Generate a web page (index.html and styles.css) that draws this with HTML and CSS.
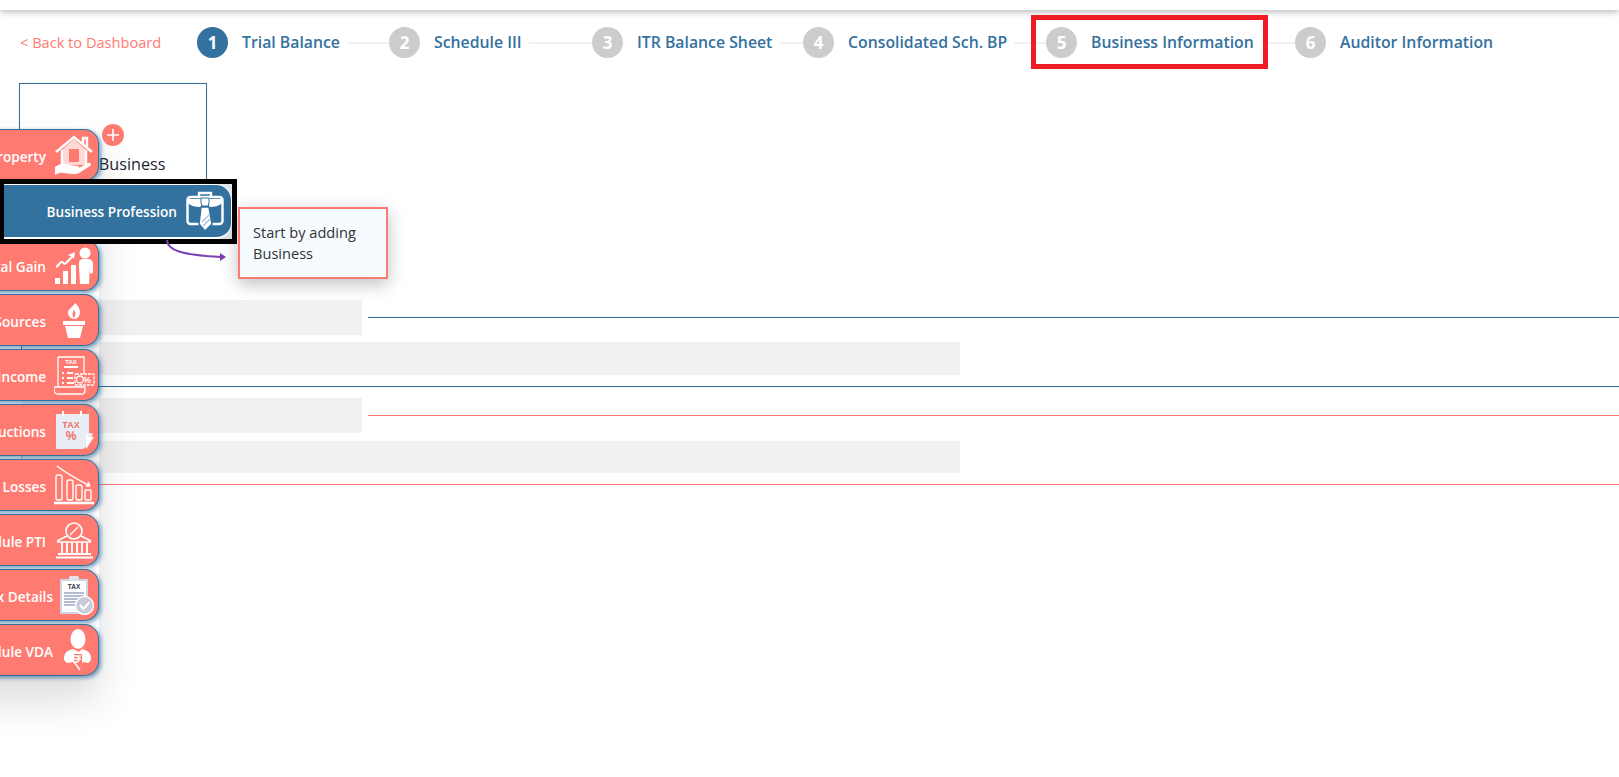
FILE: index.html
```html
<!DOCTYPE html>
<html lang="en">
<head>
<meta charset="utf-8">
<title>Business Information</title>
<link rel="stylesheet" href="styles.css">
</head>
<body>
<div class="topbar"></div>

<nav class="stepper">
  <a class="back">&lt; Back to Dashboard</a>
  <div class="step s1"><span class="num on">1</span><span class="label">Trial Balance</span><span class="line"></span></div>
  <div class="step s2"><span class="num">2</span><span class="label">Schedule III</span><span class="line"></span></div>
  <div class="step s3"><span class="num">3</span><span class="label">ITR Balance Sheet</span><span class="line"></span></div>
  <div class="step s4"><span class="num">4</span><span class="label">Consolidated Sch. BP</span><span class="line"></span></div>
  <div class="step s5"><span class="mark"></span><span class="num">5</span><span class="label">Business Information</span><span class="line"></span></div>
  <div class="step s6"><span class="num">6</span><span class="label">Auditor Information</span></div>
</nav>

<main class="content">
  <section class="card">
    <span class="plus"><svg width="14" height="14" viewBox="0 0 14 14"><path d="M7 1v12M1 7h12" stroke="#fff" stroke-width="1.6"/></svg></span>
    <span class="card-text">Add Business</span>
  </section>
  <section class="group blue">
    <div class="bone short"></div>
    <div class="bone long"></div>
  </section>
  <section class="group red">
    <div class="bone short"></div>
    <div class="bone long low"></div>
  </section>
</main>

<aside class="side">
  <div class="item"><span class="txt">House Property</span><span class="ico">
    <svg width="38" height="41" viewBox="0 0 38 41" fill="none" stroke="#fff" stroke-width="2.4"><path d="M7 15 19 4l12 11v15H7z" fill="#ffd9d5" stroke="none"/><path d="M1 17 19 2l18 15M28 9V3h4v10"/><path d="M7 15v15M31 15v15"/><rect x="14" y="14" width="10" height="13" fill="#ff7b72" stroke="none"/><path d="M0 32c6-4 10-4 14-2l8 1c3 0 3 3 0 3h-6l8-1 9-5c3-1 4 2 2 3l-11 7c-6 3-14-1-20 0l-4 2z" fill="#fff" stroke="none"/></svg></span></div>
  <div class="item"></div>
  <div class="item"><span class="txt">Capital Gain</span><span class="ico">
    <svg width="39" height="37" viewBox="0 0 39 37"><g fill="#fff"><rect x="0" y="31" width="5" height="6"/><rect x="8" y="24" width="5" height="13"/><rect x="16" y="18" width="5" height="19"/><circle cx="30" cy="6" r="5.5"/><path d="M24 16c0-3 2-4 4-4h5c3 0 5 2 5 5v8c0 2-3 2-3 0v-5l-1 17h-9l-1-17z"/><path d="m13 8 7-3-1 7-2-2z"/></g><path d="M1 20c3-1 4-6 6-5s2 3 4 1l6-6" fill="none" stroke="#fff" stroke-width="2"/></svg></span></div>
  <div class="item"><span class="txt">Other Sources</span><span class="ico">
    <svg width="22" height="35" viewBox="0 0 22 35"><path fill="#fff" d="M12 0c5 4 6 10 4 13-1 2-3 3-5 3-4-1-6-3-6-7 0-3 5-5 7-9z"/><path fill="#ff7b72" d="M11 7c2 2 2 5 0 8-2-3-2-5 0-8z"/><path fill="#fff" d="M0 18h22v4H0zM2 23h18l-3 12H5z"/></svg></span></div>
  <div class="item"><span class="txt">Other Income</span><span class="ico">
    <svg width="41" height="41" viewBox="0 0 41 41" fill="none" stroke="#fff" stroke-width="1.3"><path d="M4 2h26v18M4 2v30M4 32H0v3c0 3 2 4 4 4h24c2 0 3-2 3-4v-3H4"/><text x="17" y="9" font-size="6" font-weight="700" fill="#fff" stroke="none" text-anchor="middle" font-family="Liberation Sans">TAX</text><path d="M10 12h14M8 18h2M13 18h6M8 23h2M13 23h6M8 28h2M13 28h7" stroke-width="2"/><rect x="21" y="19" width="19" height="11" rx="1" stroke-dasharray="3 1" fill="#ff7b72"/><text x="33" y="28" font-size="9" font-weight="700" fill="#fff" stroke="none" text-anchor="middle" font-family="Liberation Sans">%</text><circle cx="26" cy="24.500" r="3.500"/></svg></span></div>
  <div class="item"><span class="txt">Deductions</span><span class="ico">
    <svg width="39" height="40" viewBox="0 0 39 40"><path fill="#e9eef4" d="M1 4h33v19h2l2 1-7 13-3 2H1z"/><path fill="#fff" d="M31 39 39 27h-5l-1-3-2 1z"/><path d="M8 1v5M26 1v5" stroke="#fff" stroke-width="2"/><text x="16" y="18" font-size="9" font-weight="700" fill="#ef6f6a" text-anchor="middle" font-family="Liberation Sans">TAX</text><text x="16" y="30" font-size="12" font-weight="700" fill="#ef6f6a" text-anchor="middle" font-family="Liberation Sans">%</text></svg></span></div>
  <div class="item"><span class="txt">Carry Forward Losses</span><span class="ico">
    <svg width="40" height="40" viewBox="0 0 40 40" fill="none" stroke="#fff" stroke-width="1.4"><rect x="2" y="10" width="6" height="25" rx="2"/><rect x="13" y="15" width="6" height="20" rx="2"/><rect x="22" y="20" width="6" height="15" rx="2"/><rect x="31" y="25" width="6" height="10" rx="1"/><path d="M0 38h40" stroke-width="2.500"/><path d="M3 1c10 8 20 13 33 20M36 21l-4 0M36 21l-2-4" stroke-width="1.500"/></svg></span></div>
  <div class="item"><span class="txt">Schedule PTI</span><span class="ico">
    <svg width="37" height="37" viewBox="0 0 37 37" fill="none" stroke="#fff" stroke-width="1.6"><circle cx="18" cy="9" r="8"/><path d="M14 13l8-8" stroke-width="1.300"/><path d="M1 19 11 14M35 19 25 14M1 20h34"/><path d="M6 20v11M11 20v11M16 20v11M21 20v11M26 20v11M31 20v11M2 32h33" stroke-width="1.800"/><path d="M0 35.500h37" stroke-width="2"/></svg></span></div>
  <div class="item wide"><span class="txt">Tax Details</span><span class="ico">
    <svg width="34" height="39" viewBox="0 0 34 39"><rect x="0" y="3" width="28" height="35" fill="#cfd4e4"/><rect x="2" y="5" width="24" height="31" fill="#fff"/><rect x="9" y="0" width="10" height="5" rx="1.500" fill="#dfe3ec"/><text x="14" y="13" font-size="6.500" font-weight="700" fill="#3a3a4a" text-anchor="middle" font-family="Liberation Sans">TAX</text><path d="M4 17h20M4 20h20M4 23h20M4 26h14M4 29h12" stroke="#9aa5c4" stroke-width="1.500"/><circle cx="24.500" cy="29.500" r="9" fill="#c8ccd8" stroke="#fff" stroke-width="1.400"/><path d="m20 29 3.500 4 6-7" fill="none" stroke="#fff" stroke-width="2"/></svg></span></div>
  <div class="item wide"><span class="txt">Schedule VDA</span><span class="ico">
    <svg width="27" height="42" viewBox="0 0 27 42"><ellipse cx="14" cy="10" rx="7.500" ry="10" fill="#fff"/><path fill="#fff" d="M9 20c-5 1-9 4-9 9 0 2 1 4 3 5l6-1 2 3 3-2 3 2 2-3 5 1c2-1 3-3 3-5 0-5-4-8-9-9l-3 3z"/><path d="M10 25h8v11h-8z" fill="#ff7b72"/><path d="M10 27h7M10 30h7M12 27c4 0 4 6 0 6h-2l6 8" fill="none" stroke="#fff" stroke-width="1.500"/></svg></span></div>
</aside>

<div class="spot">
  <div class="spot-btn"><span class="spot-txt">Business Profession</span>
    <svg width="38" height="41" viewBox="0 0 38 41" fill="none" stroke="#fff" stroke-width="2.400"><path d="M13 6V2h12v4"/><rect x="1.500" y="6" width="35" height="27" rx="3"/><path d="M2 8h13v8c-6 0-10-1-13-4zM36 8H23v8c6 0 10-1 13-4z" fill="#fff" stroke="none"/><path d="M15 7h8v5l-1 3H16l-1-3z" fill="#fff" stroke="#33719e" stroke-width="1"/><path d="M15 16h8l3 17-7 7-6-7z" fill="#fff" stroke="#33719e" stroke-width="1.500"/><path d="m16 31 7-7M17 35l7-7" stroke="#a9c3d6" stroke-width="1.500"/></svg>
  </div>
</div>

<svg class="arrow" width="62" height="22" viewBox="0 0 62 22" fill="none"><path d="M2 0c0 10 14 15 54 17" stroke="#7a3fb0" stroke-width="2"/><path d="m55 13 6 4-6 4z" fill="#7a3fb0"/></svg>

<div class="tip">Start by adding Business</div>
</body>
</html>
```

FILE: styles.css
```css
* { box-sizing: border-box; }
html, body { margin: 0; padding: 0; height: 100%; overflow: hidden; background: #fff; }
body { position: relative; font-family: "Open Sans", "Noto Sans", sans-serif; color: #222; }

.topbar { height: 10px; background: #fff; box-shadow: 0 2px 6px rgba(0,0,0,.28); }

.stepper { display: flex; align-items: center; padding: 15px 0 0 20px; height: 49px; }
.back { width: 177px; flex: none; font-size: 14.6px; color: #ff7b72; }
.step { position: relative; display: flex; align-items: center; flex: none; }
.s1 { width: 192px; } .s2 { width: 203px; } .s3 { width: 211px; }
.s4 { width: 243px; } .s5 { width: 249px; } .s6 { width: 220px; }
.num { width: 31px; height: 31px; border-radius: 50%; background: #ccc; color: #fff; font-size: 17px; font-weight: 700; display: flex; align-items: center; justify-content: center; flex: none; }
.num.on { background: #33719e; }
.label { margin-left: 14px; font-size: 15.8px; font-weight: 600; color: #33719e; white-space: nowrap; }
.line { flex: 1; height: 2px; margin: 2px 0 0 7px; background: #f2f2f2; }
.s5 .line { margin-left: 10px; }
.mark { position: absolute; left: -15px; top: -12px; width: 237px; height: 54px; border: 5px solid #ee1c25; }

.content { padding-top: 24px; }
.card { margin-left: 19px; width: 188px; height: 150px; border: 1px solid #33719e; display: flex; flex-direction: column; align-items: center; padding-top: 40px; box-shadow: 0 0 2px rgba(0,0,0,.1); }
.plus { width: 22px; height: 22px; border-radius: 50%; background: #ff7b72; display: flex; align-items: center; justify-content: center; }
.card-text { margin: 7px 0 0 4px; font-size: 16.2px; color: #1f2730; white-space: nowrap; }

.group { margin-left: 21px; height: 70px; border: solid #2f6f98; border-width: 1px 0 1px 1px; }
.group.blue { margin-top: 84px; }
.group.red { margin-top: 28px; border-color: #ff7b72; }
.bone { background: #f2f0f1; }
.bone.short { width: 346px; height: 35px; margin: -18px 0 0 0; background-clip: padding-box; border-right: 6px solid #fff; }
.bone.long { width: 938px; height: 33px; margin-top: 7px; }
.bone.long.low { margin-top: 8px; height: 32px; }

.side { position: absolute; left: -101px; top: 129px; width: 200px; display: flex; flex-direction: column; gap: 3px; box-shadow: 0 24px 40px rgba(0,0,0,.14); border-radius: 0 14px 14px 0; }
.item { height: 52px; background: #ff7b72; border: 1px solid #33719e; border-left: 0; border-radius: 0 15px 15px 0; box-shadow: 2px 2px 4px rgba(51,113,158,.7); display: flex; align-items: center; justify-content: flex-end; color: #fff; font-size: 13.6px; font-weight: 600; white-space: nowrap; }
.txt { margin-top: 3px; }
.ico { width: 48px; margin-left: 4px; display: flex; justify-content: center; flex: none; }
.wide .ico { width: 40px; margin-right: 1px; }

.spot { position: absolute; left: 0; top: 179px; width: 237px; height: 65px; border: 5px solid #000; border-left-width: 4px; background: #dfe4e8; }
.spot-btn { height: 100%; background: #33719e; border: 1px solid #fff; border-left: 0; border-width: 1px 1px 2px 0; border-radius: 0 16px 16px 0; display: flex; align-items: center; justify-content: flex-end; gap: 9px; padding-right: 7px; color: #fff; font-size: 13.6px; font-weight: 600; white-space: nowrap; }
.spot-txt { margin-top: 1px; }

.arrow { position: absolute; left: 165px; top: 240px; }
.tip { position: absolute; left: 238px; top: 207px; width: 150px; height: 72px; padding: 13px 13px; background: #f6fbff; border: 2px solid #fb7b72; box-shadow: 0 5px 16px rgba(0,0,0,.25); font-size: 14.6px; line-height: 21px; color: #333; }
```
